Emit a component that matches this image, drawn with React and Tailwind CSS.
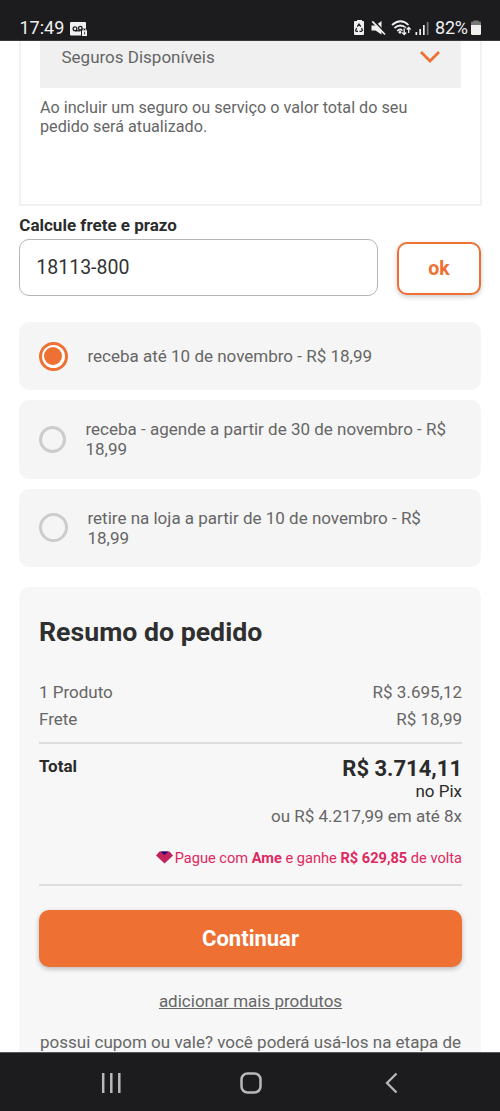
import React from 'react';

function StatusBar() {
  return (
    <header className="flex h-[41px] shrink-0 items-start justify-between border-b border-[#3a3a3b] bg-[#1c1c1e] pl-[19.500px] pr-[19px] pt-[18px] text-[#f0f0f0]">
      <div className="flex h-5 items-center">
        <span className="w-[50.500px] whitespace-nowrap text-[18px] leading-5">17:49</span>
        <svg className="mt-px" width="18" height="16" viewBox="0 0 18 16">
          <rect x="0" y="1" width="16" height="13.5" rx="1" fill="#f0f0f0" />
          <g fill="none" stroke="#1c1c1e" strokeWidth="1.3">
            <circle cx="5" cy="7.7" r="1.9" />
            <circle cx="10.3" cy="7.2" r="1.8" />
            <path d="M5 9.8h5.5" />
          </g>
          <path d="M11 9q3-4 6.5 0v7H11z" fill="#1c1c1e" />
          <rect x="12" y="9.3" width="5" height="5.7" rx="0.5" fill="#f0f0f0" />
          <path d="M13 9.3V8.4q1.5-2 3 0v.9" fill="none" stroke="#f0f0f0" strokeWidth="0.9" />
          <path d="M14.6 10.8v2.7" stroke="#1c1c1e" strokeWidth="0.8" />
        </svg>
      </div>
      <div className="flex h-5 items-center">
        <svg width="82" height="20" viewBox="0 0 82 20">
          <path d="M3 3h1V2h5v1h1.200q.8 0 .8 1v12q0 1-1 1H2q-1 0-1-1V4q0-1 1-1z" fill="#f0f0f0" />
          <g fill="none" stroke="#1c1c1e" strokeWidth="1.200">
            <path d="M4.300 8.600L6 6l1.800 2.600M8.500 10l1 2.400-1.200 1H6.500M5 13.400H3.200l-.6-1L3.600 10" />
          </g>
          <path d="M18.500 7.500h4L28.500 3v13.500l-6-4h-4z" fill="#f0f0f0" />
          <path d="M20.500 2.500L33 15.500" stroke="#1c1c1e" strokeWidth="1.800" />
          <path d="M19.300 3.300L32 16.500" stroke="#f0f0f0" strokeWidth="1.700" />
          <g fill="none" stroke="#f0f0f0" strokeWidth="1.700">
            <path d="M39 7q8.500-7.500 16.500 0" />
            <path d="M41.500 10q5.800-5 11.500 0" />
            <path d="M44.200 13q3-3 6 0" />
          </g>
          <circle cx="47" cy="14.300" r="1.400" fill="#f0f0f0" />
          <path d="M51 9.500v8M55.500 17V9" fill="none" stroke="#1c1c1e" strokeWidth="3" />
          <path d="M51.200 10.500v6M49.200 14.500l2 2 2-2M55.700 15V9.500M53.700 11.500l2-2 2 2" fill="none" stroke="#f0f0f0" strokeWidth="1.300" />
          <g fill="#f0f0f0">
            <rect x="62.500" y="14" width="1.700" height="3" />
            <rect x="66.300" y="11" width="1.700" height="6" />
            <rect x="70" y="7" width="1.700" height="10" />
            <rect x="73.800" y="4" width="1.700" height="13" fill="#777778" />
          </g>
        </svg>
        <span className="w-[36px] whitespace-nowrap text-[18px] leading-5 tracking-[-0.2px]">82%</span>
        <svg width="10" height="20" viewBox="0 0 10 20">
          <path d="M2.500 3.500V2.500h5v1H9q1 0 1 1v2.500H0V4.500q0-1 1-1z" fill="#777778" />
          <path d="M0 7h10v8.500q0 1.500-1.500 1.500h-7Q0 17 0 15.500z" fill="#f0f0f0" />
        </svg>
      </div>
    </header>
  );
}

function Insurance() {
  return (
    <section className="ml-[19px] mr-[18px] h-[165px] shrink-0 border-x-2 border-b-2 border-[#f1f1f1] px-[19px]">
      <div className="flex h-[47px] items-start justify-between bg-[#f0f0f0] pl-[21.500px] pr-[21px]">
        <span className="mt-1.5 leading-5">Seguros Disponíveis</span>
        <svg className="mt-[9px]" width="20" height="14" viewBox="0 0 20 14" fill="none" stroke="#ee7033" strokeWidth="2.800">
          <path d="M1 2l9 9 9-9" />
        </svg>
      </div>
      <p className="mt-[10px] whitespace-nowrap text-[16.200px] leading-[19px]">
        Ao incluir um seguro ou serviço o valor total do seu
        <br />
        pedido será atualizado.
      </p>
    </section>
  );
}

function Shipping() {
  return (
    <section className="ml-[19.300px] mr-[18.700px] mt-[9px] shrink-0">
      <h2 className="font-bold leading-5 text-[#2b2b2b]">Calcule frete e prazo</h2>
      <div className="mt-[4px] flex h-[57px] justify-between">
        <div className="flex w-[358.500px] items-center rounded-[10px] border border-[#b5b5b5] pl-4 text-[19.500px] text-[#333333]">
          18113-800
        </div>
        <button className="mt-[3px] h-[53px] w-[84.500px] rounded-[10px] border-2 border-[#ee7033] bg-white text-[19.500px] font-bold text-[#ee7033] shadow-[0_2px_5px_rgba(0,0,0,0.2)]">
          ok
        </button>
      </div>
    </section>
  );
}

function Radio({ checked, small }) {
  if (checked) {
    return (
      <span className="flex size-[29px] shrink-0 items-center justify-center rounded-full border-[3px] border-[#ee7033] bg-white">
        <span className="size-[18px] rounded-full bg-[#ee7033]" />
      </span>
    );
  }
  return (
    <span
      className={
        small
          ? 'size-[27px] shrink-0 rounded-full border-[3px] border-[#cccccc]'
          : 'size-[29px] shrink-0 rounded-full border-[3px] border-[#cccccc]'
      }
    />
  );
}

function Options() {
  return (
    <section className="ml-[19.300px] mr-[18.700px] mt-[26px] flex shrink-0 flex-col gap-[10px] leading-5 [&>label]:flex [&>label]:items-center [&>label]:gap-[19.500px] [&>label]:rounded-[10px] [&>label]:bg-[#f5f5f5] [&>label]:pl-[19.700px]">
      <label className="h-[68px]">
        <Radio checked />
        <span className="whitespace-nowrap">receba até 10 de novembro - R$ 18,99</span>
      </label>
      <label className="h-[78.500px]">
        <Radio small />
        <span className="whitespace-nowrap">
          receba - agende a partir de 30 de novembro - R$
          <br />
          18,99
        </span>
      </label>
      <label className="h-[78.500px]">
        <Radio />
        <span className="whitespace-nowrap">
          retire na loja a partir de 10 de novembro - R$
          <br />
          18,99
        </span>
      </label>
    </section>
  );
}

function Gem() {
  return (
    <svg className="-mt-[3px]" width="17" height="13" viewBox="0 0 17 13">
      <path d="M3.500 0.500h10L17 4.500 8.500 12.500 0 4.500z" fill="#c2235c" />
      <path d="M4.500 0.500h8L8.500 4z" fill="#1b0a7c" />
    </svg>
  );
}

function Summary() {
  return (
    <section className="ml-[19.300px] mr-[18.700px] mt-5 flex grow flex-col rounded-t-[10px] bg-[#f7f7f7] pl-[19.700px] pr-[19.300px] pt-[30px]">
      <h1 className="h-[30px] text-[26.700px] font-bold leading-[30px] text-[#2f2f2f]">Resumo do pedido</h1>
      <div className="mt-[35px] flex justify-between leading-5">
        <span>1 Produto</span>
        <span>R$ 3.695,12</span>
      </div>
      <div className="mt-[7px] flex justify-between leading-5">
        <span>Frete</span>
        <span>R$ 18,99</span>
      </div>
      <hr className="mt-[13px] border-t-2 border-[#dedede]" />
      <div className="mt-[12px] flex justify-between text-[#2b2b2b]">
        <strong className="leading-5">Total</strong>
        <div className="flex flex-col items-end">
          <strong className="mt-[3px] text-[22px] leading-5">R$ 3.714,11</strong>
          <span className="mt-[2px] leading-5">no Pix</span>
          <span className="mt-[5px] leading-5 text-[#666666]">ou R$ 4.217,99 em até 8x</span>
        </div>
      </div>
      <div className="mt-[23px] flex h-5 items-center justify-end gap-[2px] text-[14.600px] text-[#e02860]">
        <Gem />
        <span className="whitespace-nowrap">
          Pague com <b>Ame</b> e ganhe <b>R$ 629,85</b> de volta
        </span>
      </div>
      <hr className="mt-[15px] border-t-2 border-[#dedede]" />
      <button className="mt-[24px] h-[57px] rounded-[10px] bg-[#ee7033] text-[22px] font-bold text-white shadow-[0_2px_5px_rgba(0,0,0,0.25)]">
        Continuar
      </button>
      <a className="mt-[24px] self-center leading-5 underline">adicionar mais produtos</a>
      <p className="mt-[21px] self-center whitespace-nowrap leading-5">possui cupom ou vale? você poderá usá-los na etapa de</p>
    </section>
  );
}

function NavBar() {
  return (
    <nav className="flex h-[59px] shrink-0 items-center border-t border-[#59595b] bg-[#1c1c1e] pl-[101px] pt-[2px]">
      <svg width="20" height="22" viewBox="0 0 20 22" stroke="#b8b8b8" strokeWidth="2.500">
        <path d="M2.200 1v20M10.300 1v20M18.300 1v20" />
      </svg>
      <svg className="ml-[119px]" width="22" height="22" viewBox="0 0 22 22" fill="none" stroke="#b8b8b8" strokeWidth="2.500">
        <rect x="1.500" y="1.500" width="19" height="19" rx="6" />
      </svg>
      <svg className="ml-[123px]" width="13" height="22" viewBox="0 0 13 22" fill="none" stroke="#b8b8b8" strokeWidth="2.300">
        <path d="M11.500 1.500L2 11l9.500 9.500" />
      </svg>
    </nav>
  );
}

export default function App() {
  return (
    <div className="flex h-[1111px] w-[500px] flex-col overflow-hidden bg-white font-['Roboto',sans-serif] text-[17px] text-[#666666]">
      <StatusBar />
      <main className="flex min-h-0 grow flex-col overflow-hidden">
        <Insurance />
        <Shipping />
        <Options />
        <Summary />
      </main>
      <NavBar />
    </div>
  );
}
